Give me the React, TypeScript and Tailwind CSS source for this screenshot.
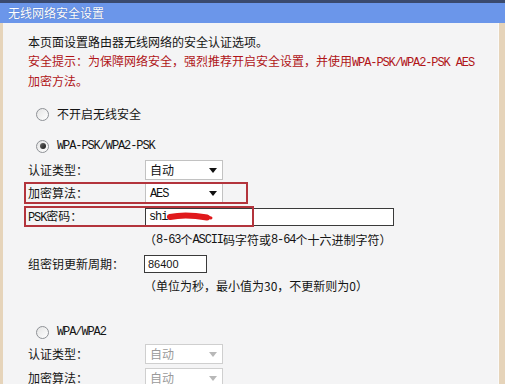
import React from "react";

const M = ({ children }: { children: React.ReactNode }) => (
  <span className="font-['Liberation_Mono',monospace] text-[12px] tracking-[-1.1px]">{children}</span>
);

const Radio = ({ checked }: { checked?: boolean }) => (
  <div className="w-[13px] h-[13px] rounded-full border border-[#8e9196] bg-gradient-to-br from-[#e4e4e4] to-[#ffffff] flex items-center justify-center shrink-0">
    {checked && <div className="w-[6px] h-[6px] rounded-full bg-gradient-to-br from-[#6b6b6b] to-[#1a1a1a]" />}
  </div>
);

const Select = ({ text, disabled, mono }: { text: string; disabled?: boolean; mono?: boolean }) => (
  <div
    className={`w-[78px] h-[20px] bg-white border flex items-center justify-between pl-[4px] pr-[4px] ${
      disabled ? "border-[#cfcfcf] text-[#9a9a9a]" : "border-[#c2c2c2] text-[#111]"
    }`}
  >
    <span>{mono ? <M>{text}</M> : text}</span>
    <svg width="8" height="5" viewBox="0 0 8 5" className="mr-[1px]">
      <path d="M0 0 L8 0 L4 5 Z" fill={disabled ? "#b8b8b8" : "#111"} />
    </svg>
  </div>
);

export default function App() {
  return (
    <div className="w-[505px] h-[384px] overflow-hidden bg-[#e6d4ba] font-['Noto_Sans_CJK_SC',sans-serif] text-[12px] text-[#141414] flex flex-col">
      <div className="h-[3px] bg-[#3a4a6e] shrink-0" />
      <div className="h-[20px] bg-[#6b96ea] shrink-0 flex items-center pl-[8px] text-white text-[12px] [text-shadow:0_0_1px_#3d5fa8]">
        无线网络安全设置
      </div>
      <div className="flex-1 flex pl-[3px] pr-[6px]">
        <div className="flex-1 bg-[#f4f4f5] border-r border-[#fafafa] pl-[25px] pt-[10px]">
          <div className="leading-[18px] mb-[1px]">本页面设置路由器无线网络的安全认证选项。</div>
          <div className="leading-[18px] text-[#b01418]">
            安全提示：为保障网络安全，强烈推荐开启安全设置，并使用<M>WPA-PSK/WPA2-PSK AES</M>
            <br />
            加密方法。
          </div>

          <div className="mt-[15px] h-[18px] flex items-center pl-[8px] gap-[8px]">
            <Radio />
            <span>不开启无线安全</span>
          </div>

          <div className="mt-[14px] h-[18px] flex items-center pl-[8px] gap-[8px]">
            <Radio checked />
            <M>WPA-PSK/WPA2-PSK</M>
          </div>

          <div className="mt-[4px] h-[22px] flex items-center">
            <span className="w-[117px]">认证类型：</span>
            <Select text="自动" />
          </div>

          <div className="mt-[1px] h-[22px] flex items-center relative">
            <span className="w-[117px]">加密算法：</span>
            <Select text="AES" mono />
            <div className="absolute left-[-4px] top-0 w-[224px] h-[22px] border-2 border-[#b3343c]" />
          </div>

          <div className="mt-[2px] h-[21px] flex items-center relative">
            <span className="w-[117px]">
              <M>PSK</M>密码：
            </span>
            <div className="w-[249px] h-[18px] bg-white border border-[#3a3a3a] flex items-center pl-[3px] relative">
              <M>shi</M>
              <svg width="46" height="10" viewBox="0 0 46 10">
                <path d="M3 5 C 12 3, 26 3, 40 5.5" stroke="#e0191c" strokeWidth="6" strokeLinecap="round" fill="none" />
                <path d="M36 4 L 44 6" stroke="#e0191c" strokeWidth="3" strokeLinecap="round" fill="none" />
              </svg>
            </div>
            <div className="absolute left-[-4px] top-0 w-[230px] h-[21px] border-2 border-[#b3343c]" />
          </div>

          <div className="mt-[4px] h-[18px] flex items-center pl-[116px]">
            （<M>8-63</M>个<M>ASCII</M>码字符或<M>8-64</M>个十六进制字符）
          </div>

          <div className="mt-[4px] h-[22px] flex items-center">
            <span className="w-[116px]">组密钥更新周期：</span>
            <div className="w-[63px] h-[18px] bg-white border border-[#3a3a3a] flex items-center pl-[3px] font-['Liberation_Sans',sans-serif] text-[11px]">
              86400
            </div>
          </div>

          <div className="mt-[2px] h-[18px] flex items-center pl-[116px]">
            （单位为秒，最小值为30，不更新则为0）
          </div>

          <div className="mt-[28px] h-[18px] flex items-center pl-[8px] gap-[8px]">
            <Radio />
            <M>WPA/WPA2</M>
          </div>

          <div className="mt-[2px] h-[22px] flex items-center">
            <span className="w-[117px]">认证类型：</span>
            <Select text="自动" disabled />
          </div>

          <div className="mt-[2px] h-[22px] flex items-center">
            <span className="w-[117px]">加密算法：</span>
            <Select text="自动" disabled />
          </div>
        </div>
      </div>
    </div>
  );
}
